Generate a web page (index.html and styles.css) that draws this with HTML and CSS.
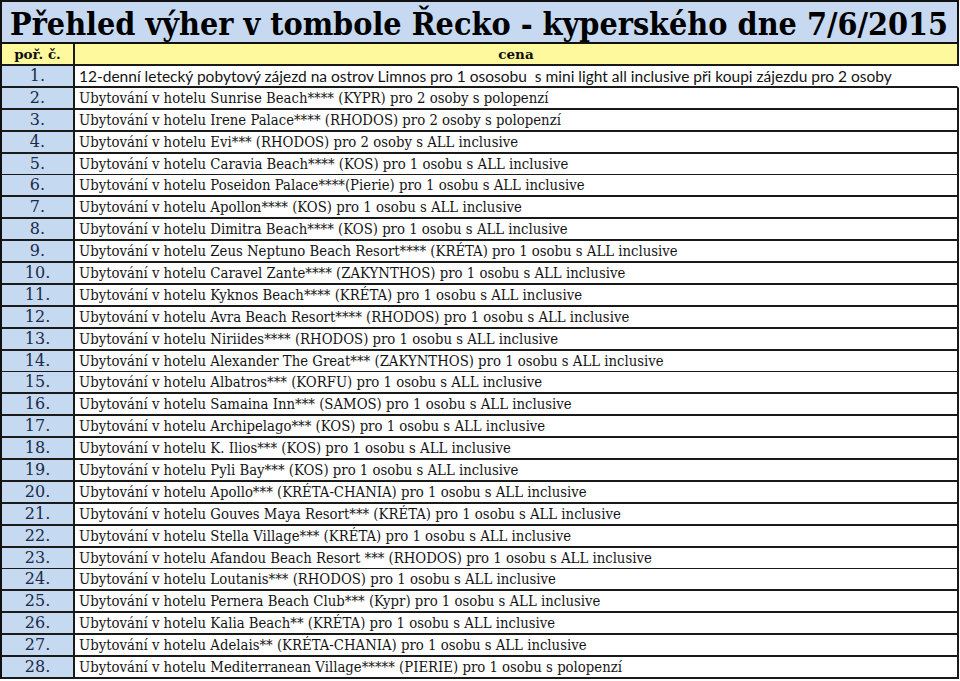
FILE: index.html
```html
<!DOCTYPE html>
<html lang="cs">
<head>
<meta charset="utf-8">
<title>Přehled výher v tombole</title>
<link rel="stylesheet" href="styles.css">
</head>
<body>
<div class="sheet">
  <div class="title">Přehled výher v tombole Řecko - kyperského dne 7/6/2015</div>
  <div class="row head"><div class="num">poř. č.</div><div class="txt">cena</div></div>
  <div class="row first"><div class="num">1.</div><div class="txt sans">12-denní letecký pobytový zájezd na ostrov Limnos pro 1 ososobu &nbsp;s mini light all inclusive při koupi zájezdu pro 2 osoby</div></div>
  <div class="row"><div class="num">2.</div><div class="txt">Ubytování v hotelu Sunrise Beach**** (KYPR) pro 2 osoby s polopenzí</div></div>
  <div class="row"><div class="num">3.</div><div class="txt">Ubytování v hotelu Irene Palace**** (RHODOS) pro 2 osoby s polopenzí</div></div>
  <div class="row"><div class="num">4.</div><div class="txt">Ubytování v hotelu Evi*** (RHODOS) pro 2 osoby s ALL inclusive</div></div>
  <div class="row"><div class="num">5.</div><div class="txt">Ubytování v hotelu Caravia Beach**** (KOS) pro 1 osobu s ALL inclusive</div></div>
  <div class="row"><div class="num">6.</div><div class="txt">Ubytování v hotelu Poseidon Palace****(Pierie) pro 1 osobu s ALL inclusive</div></div>
  <div class="row"><div class="num">7.</div><div class="txt">Ubytování v hotelu Apollon**** (KOS) pro 1 osobu s ALL inclusive</div></div>
  <div class="row"><div class="num">8.</div><div class="txt">Ubytování v hotelu Dimitra Beach**** (KOS) pro 1 osobu s ALL inclusive</div></div>
  <div class="row"><div class="num">9.</div><div class="txt">Ubytování v hotelu Zeus Neptuno Beach Resort**** (KRÉTA) pro 1 osobu s ALL inclusive</div></div>
  <div class="row"><div class="num">10.</div><div class="txt">Ubytování v hotelu Caravel Zante**** (ZAKYNTHOS) pro 1 osobu s ALL inclusive</div></div>
  <div class="row"><div class="num">11.</div><div class="txt">Ubytování v hotelu Kyknos Beach**** (KRÉTA) pro 1 osobu s ALL inclusive</div></div>
  <div class="row"><div class="num">12.</div><div class="txt">Ubytování v hotelu Avra Beach Resort**** (RHODOS) pro 1 osobu s ALL inclusive</div></div>
  <div class="row"><div class="num">13.</div><div class="txt">Ubytování v hotelu Niriides**** (RHODOS) pro 1 osobu s ALL inclusive</div></div>
  <div class="row"><div class="num">14.</div><div class="txt">Ubytování v hotelu Alexander The Great*** (ZAKYNTHOS) pro 1 osobu s ALL inclusive</div></div>
  <div class="row"><div class="num">15.</div><div class="txt">Ubytování v hotelu Albatros*** (KORFU) pro 1 osobu s ALL inclusive</div></div>
  <div class="row"><div class="num">16.</div><div class="txt">Ubytování v hotelu Samaina Inn*** (SAMOS) pro 1 osobu s ALL inclusive</div></div>
  <div class="row"><div class="num">17.</div><div class="txt">Ubytování v hotelu Archipelago*** (KOS) pro 1 osobu s ALL inclusive</div></div>
  <div class="row"><div class="num">18.</div><div class="txt">Ubytování v hotelu K. Ilios*** (KOS) pro 1 osobu s ALL inclusive</div></div>
  <div class="row"><div class="num">19.</div><div class="txt">Ubytování v hotelu Pyli Bay*** (KOS) pro 1 osobu s ALL inclusive</div></div>
  <div class="row"><div class="num">20.</div><div class="txt">Ubytování v hotelu Apollo*** (KRÉTA-CHANIA) pro 1 osobu s ALL inclusive</div></div>
  <div class="row"><div class="num">21.</div><div class="txt">Ubytování v hotelu Gouves Maya Resort*** (KRÉTA) pro 1 osobu s ALL inclusive</div></div>
  <div class="row"><div class="num">22.</div><div class="txt">Ubytování v hotelu Stella Village*** (KRÉTA) pro 1 osobu s ALL inclusive</div></div>
  <div class="row"><div class="num">23.</div><div class="txt">Ubytování v hotelu Afandou Beach Resort *** (RHODOS) pro 1 osobu s ALL inclusive</div></div>
  <div class="row"><div class="num">24.</div><div class="txt">Ubytování v hotelu Loutanis*** (RHODOS) pro 1 osobu s ALL inclusive</div></div>
  <div class="row"><div class="num">25.</div><div class="txt">Ubytování v hotelu Pernera Beach Club*** (Kypr) pro 1 osobu s ALL inclusive</div></div>
  <div class="row"><div class="num">26.</div><div class="txt">Ubytování v hotelu Kalia Beach** (KRÉTA) pro 1 osobu s ALL inclusive</div></div>
  <div class="row"><div class="num">27.</div><div class="txt">Ubytování v hotelu Adelais** (KRÉTA-CHANIA) pro 1 osobu s ALL inclusive</div></div>
  <div class="row last"><div class="num">28.</div><div class="txt">Ubytování v hotelu Mediterranean Village***** (PIERIE) pro 1 osobu s polopenzí</div></div>
</div>
</body>
</html>
```
FILE: styles.css
```css
html, body {
  margin: 0;
  padding: 0;
  background: #ffffff;
}
body {
  width: 960px;
  height: 681px;
  overflow: hidden;
  font-family: "DejaVu Serif", "Liberation Serif", serif;
  color: #111;
}
.sheet {
  width: 959px;
  border-left: 2px solid #111;
  box-sizing: border-box;
}
.title {
  height: 44px;
  box-sizing: border-box;
  border-top: 2px solid #111;
  border-right: 2px solid #111;
  border-bottom: 2px solid #111;
  background: #c6d9f1;
  padding-left: 8px;
  padding-top: 2px;
  font-weight: bold;
  font-size: 32px;
  font-stretch: condensed;
  line-height: 40px;
  white-space: nowrap;
  overflow: hidden;
  color: #000;
}
.row {
  display: grid;
  grid-template-columns: 73px 1fr;
  height: 21.9px;
  box-sizing: border-box;
  border-bottom: 2px solid #1a1a1a;
  border-right: 2px solid #1a1a1a;
}
.row.first {
  border-right-color: transparent;
}
.row.last {
  border-bottom-width: 3px;
}
.num {
  background: #c5d9f1;
  border-right: 2px solid #1a1a1a;
  text-align: center;
  font-size: 16px;
  line-height: 20px;
  color: #1c2a48;
}
.txt {
  background: #fff;
  padding-left: 4px;
  font-size: 14.75px;
  font-stretch: condensed;
  line-height: 20px;
  white-space: nowrap;
  overflow: hidden;
  color: #141414;
}
.txt.sans {
  font-family: "Lato", "Liberation Sans", sans-serif;
  font-size: 15.5px;
  font-stretch: normal;
}
.row.head {
  height: 22px;
}
.row.head .num,
.row.head .txt {
  background: #fdf99c;
  font-weight: bold;
  font-size: 13.5px;
  font-stretch: normal;
  color: #111;
}
.row.head .txt {
  text-align: center;
  padding-left: 0;
}
```
